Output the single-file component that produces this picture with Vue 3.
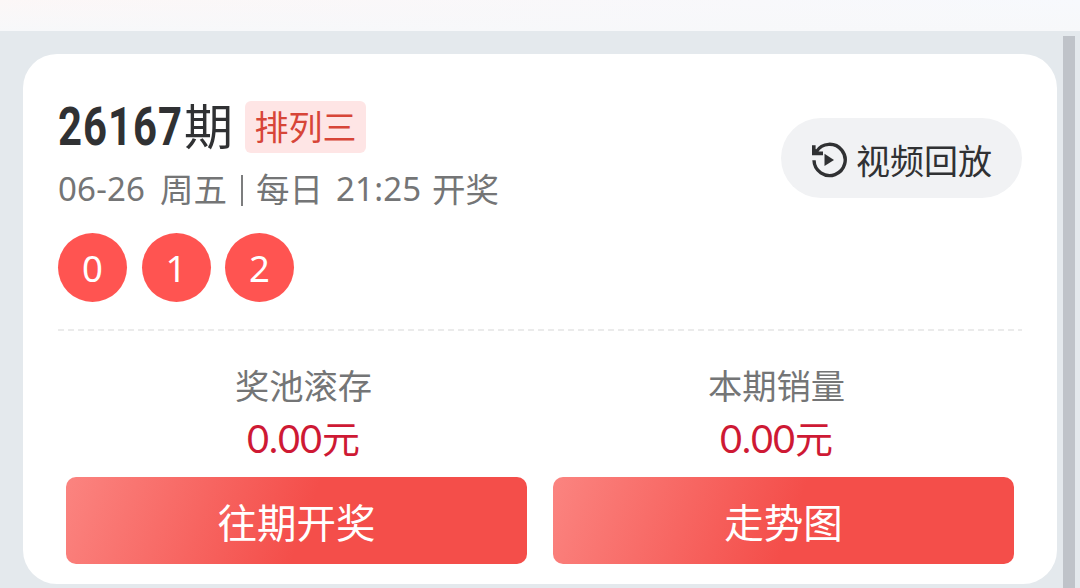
<script setup>
const balls = [0, 1, 2]
const stats = [
  { label: '奖池滚存', value: '0.00', action: '往期开奖' },
  { label: '本期销量', value: '0.00', action: '走势图' }
]
</script>

<template>
  <div class="page">
    <div class="topbar"></div>
    <div class="scrollbar"></div>
    <section class="card">
      <header class="head">
        <div class="info">
          <div class="title-row">
            <span class="issue"><span class="issue-num">26167</span></span>
            <span class="issue-unit">期</span>
            <span class="tag">排列三</span>
          </div>
          <div class="schedule">
            <span class="date">06-26</span>
            <span class="week">周五</span>
            <span class="bar"></span>
            <span class="daily">每日</span>
            <span class="time">21:25</span>
            <span>开奖</span>
          </div>
        </div>
        <button class="replay">
          <svg width="36" height="36" viewBox="0 0 36 36" fill="none">
            <path d="M5.4 9.6A15.6 15.6 0 1 1 3 18.3" stroke="#303133" stroke-width="3.4" />
            <path d="M1 3.2H4.6V7L7.6 9.6H12V13.2H1Z" fill="#303133" />
            <path d="M13.5 11.7V24L23 17.9Z" fill="#303133" />
          </svg>
          <span>视频回放</span>
        </button>
      </header>
      <div class="balls">
        <span v-for="n in balls" :key="n" class="ball">{{ n }}</span>
      </div>
      <div class="divider"></div>
      <div class="stats">
        <div v-for="s in stats" :key="s.label" class="stat">
          <div class="label">{{ s.label }}</div>
          <div class="value"><span class="amount">{{ s.value }}</span><span>元</span></div>
          <button class="action">{{ s.action }}</button>
        </div>
      </div>
    </section>
  </div>
</template>

<style>
body {
  margin: 0;
  overflow: hidden;
}
</style>

<style scoped>
.page {
  position: relative;
  box-sizing: border-box;
  width: 1080px;
  height: 588px;
  overflow: hidden;
  background: #e4e9ed;
  font-family: "KaiTi", "STKaiti", "Noto Sans CJK SC", sans-serif;
}
.topbar {
  height: 31px;
  background: linear-gradient(180deg, rgba(247, 248, 250, 0), #f7f8fa), linear-gradient(90deg, #fcf7f7, #f8f8fb 70%, #f7f9fd);
}
.scrollbar {
  position: absolute;
  left: 1063px;
  top: 36px;
  width: 12px;
  height: 552px;
  background: #bfc3c9;
}
.card {
  box-sizing: border-box;
  width: 1034px;
  height: 530px;
  margin: 23.4px 0 0 23px;
  padding: 45px 35px 0;
  border-radius: 34px;
  background: #fff;
}
.head {
  display: flex;
  justify-content: space-between;
  height: 134px;
}
.title-row {
  display: flex;
  align-items: center;
  height: 54px;
}
.issue {
  width: 126px;
  height: 54px;
}
.issue-num {
  display: inline-block;
  font: 700 53px/56px Roboto, sans-serif;
  letter-spacing: 1.2px;
  color: #303133;
  transform: scaleX(0.79);
  transform-origin: left;
}
.issue-unit {
  width: 61px;
  font-size: 49px;
  line-height: 50px;
  padding-bottom: 4px;
  color: #303133;
}
.tag {
  box-sizing: border-box;
  width: 121px;
  height: 52px;
  margin-top: 1px;
  border-radius: 6px;
  background: #fee5e5;
  color: #d74538;
  font-size: 34px;
  line-height: 50px;
  text-align: center;
}
.schedule {
  display: flex;
  align-items: center;
  height: 50px;
  margin-top: 10px;
  font-size: 33.5px;
  line-height: 50px;
  color: #747576;
}
.date,
.time {
  padding-top: 2px;
  font-family: "Noto Sans", sans-serif;
  font-size: 33px;
  font-weight: 400;
  letter-spacing: 0.2px;
}
.date {
  width: 102px;
}
.week {
  width: 81px;
}
.bar {
  width: 2px;
  height: 31px;
  margin: 4px 13px 0 0;
  background: #7c7d7e;
}
.daily {
  width: 80px;
}
.time {
  width: 96px;
}
.replay {
  display: flex;
  align-items: center;
  box-sizing: border-box;
  width: 241px;
  height: 80px;
  margin-top: 19px;
  padding: 4px 0 0 30px;
  border: 0;
  border-radius: 40px;
  background: #f1f2f4;
  color: #303133;
  font: 34px/50px "Noto Sans CJK SC", sans-serif;
}
.replay svg {
  margin-right: 9px;
}
.replay span {
  margin-top: -1px;
}
.balls {
  display: flex;
  gap: 14.5px;
}
.ball {
  width: 69px;
  height: 69px;
  border-radius: 50%;
  background: #ff5451;
  color: #fff;
  font: 400 36.5px/71px "Noto Sans", sans-serif;
  text-align: center;
}
.divider {
  height: 2px;
  margin-top: 27px;
  background: repeating-linear-gradient(90deg, #ebebeb 0 6px, transparent 6px 10px);
}
.stats {
  display: flex;
  gap: 26px;
  margin: 27px 8px 0;
}
.stat {
  width: 461px;
  text-align: center;
}
.label {
  height: 52px;
  padding-left: 14px;
  font-size: 34.3px;
  line-height: 52px;
  color: #747576;
}
.value {
  height: 56px;
  padding-left: 14px;
  font-size: 38px;
  line-height: 54px;
  color: #ce1934;
}
.stat:last-child .label,
.stat:last-child .value {
  padding: 0 14px 0 0;
}
.amount {
  font-family: Lato, sans-serif;
}
.action {
  width: 461px;
  height: 87px;
  margin-top: 11px;
  padding: 0;
  border: 0;
  border-radius: 10px;
  background: linear-gradient(110deg, #fb8480, #f44e4a 52%);
  color: #fff;
  font: 39.5px/84px "KaiTi", "STKaiti", "Noto Sans CJK SC", sans-serif;
}
</style>
